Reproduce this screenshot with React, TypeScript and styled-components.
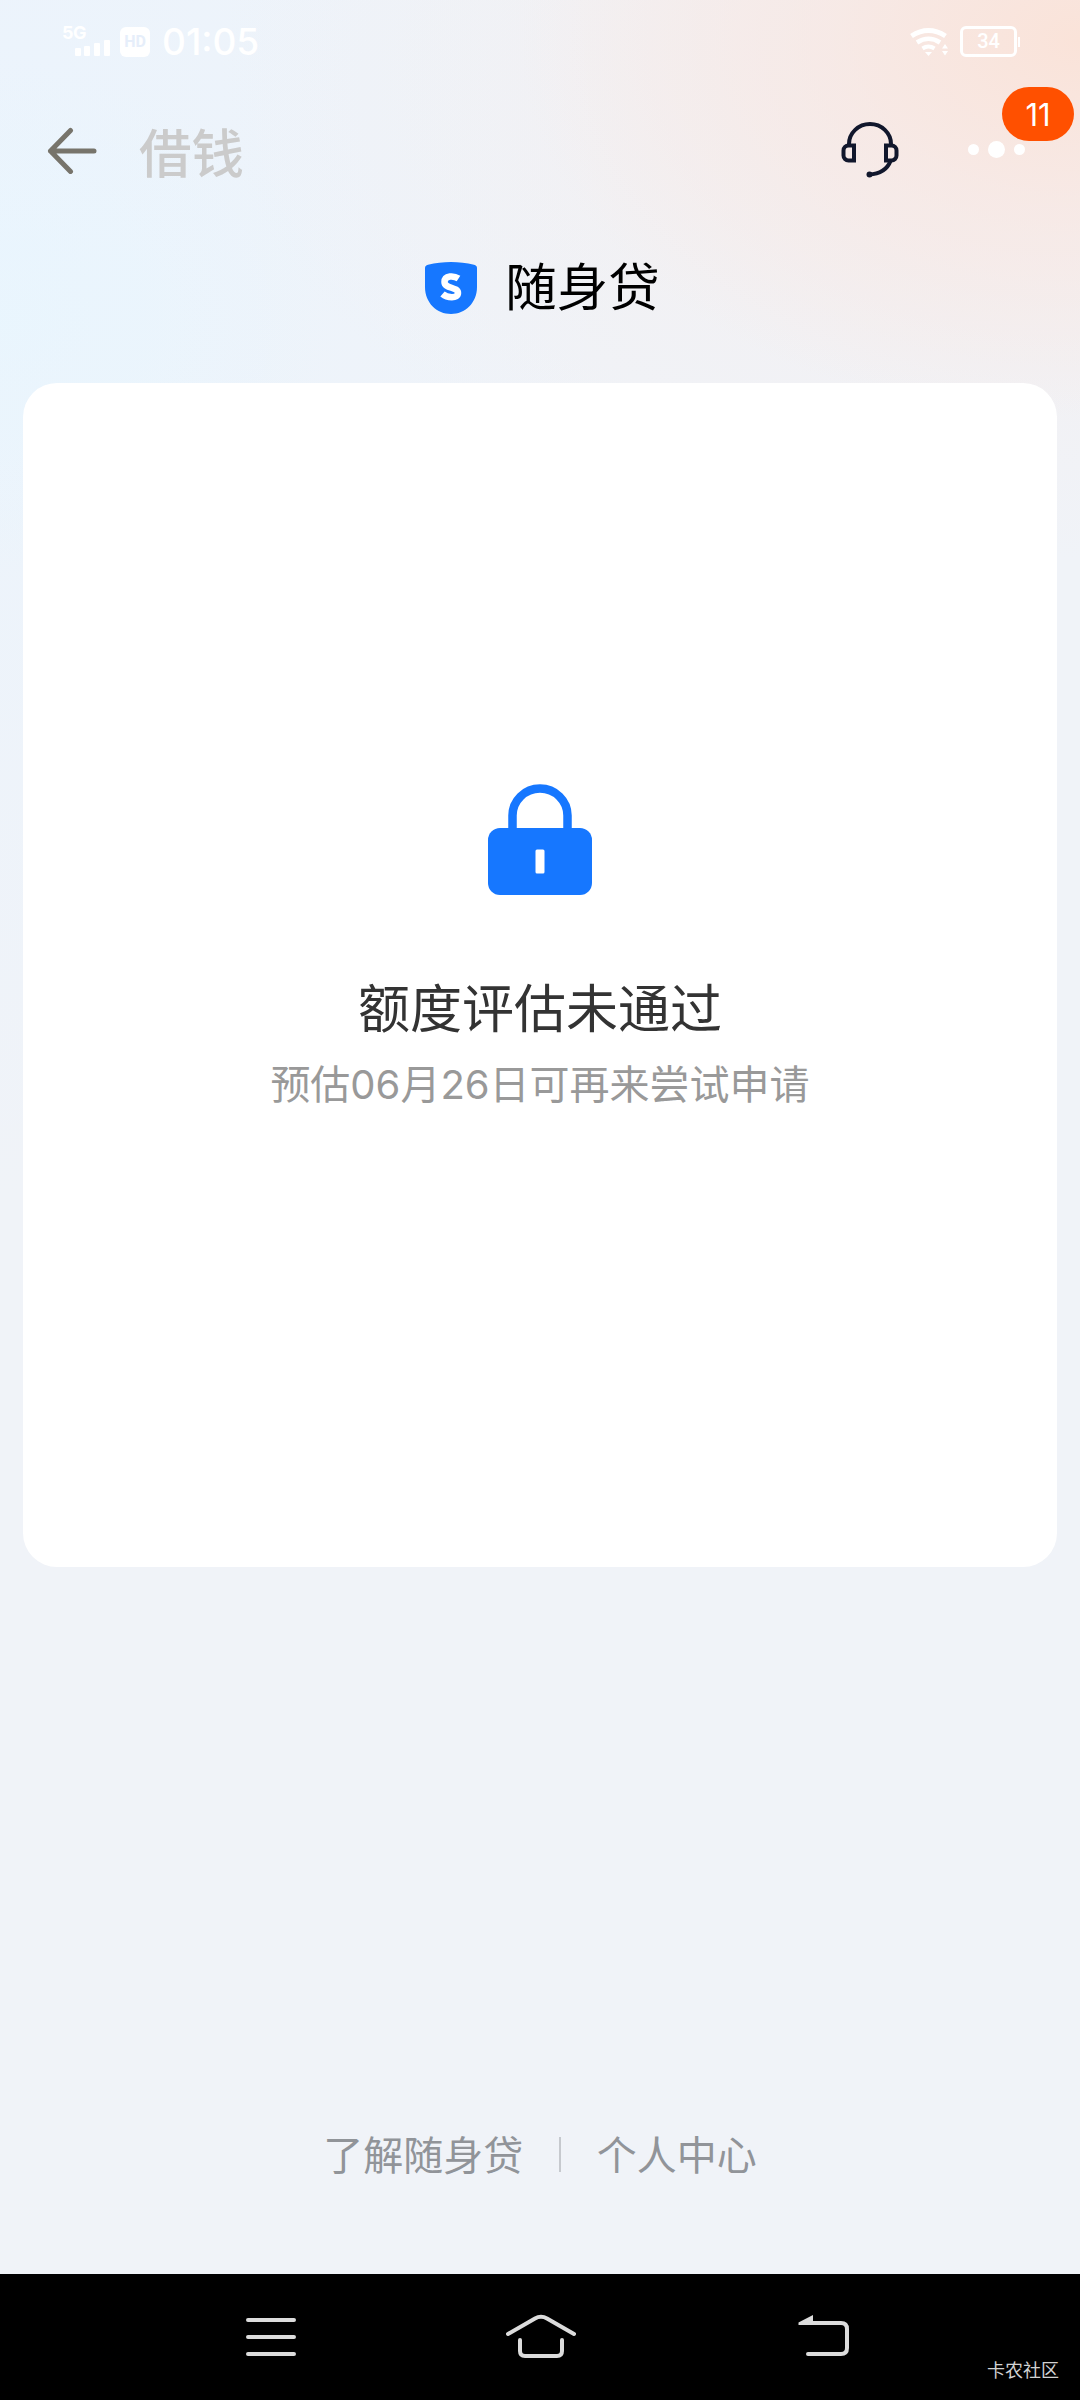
import React from 'react';
import styled, { createGlobalStyle } from 'styled-components';

const Global = createGlobalStyle`
  * { box-sizing: border-box; }
  body { margin: 0; background: #f0f3f8; }
`;

const cjk = `'Noto Sans CJK SC', sans-serif`;

const Screen = styled.div`
  width: 1080px;
  height: 2400px;
  display: flex;
  flex-direction: column;
  overflow: hidden;
  font-family: ${cjk};
  background:
    radial-gradient(ellipse 560px 380px at 1080px 40px, rgba(250, 227, 217, 1) 0%, rgba(248, 231, 226, 0.7) 45%, rgba(244, 238, 238, 0) 100%),
    radial-gradient(ellipse 860px 480px at 1080px 80px, rgba(245, 237, 236, 0.85) 0%, rgba(243, 240, 243, 0) 100%),
    radial-gradient(ellipse 330px 260px at 0px 320px, rgba(232, 246, 254, 0.7) 0%, rgba(235, 244, 252, 0) 100%),
    radial-gradient(ellipse 640px 1000px at 0px 200px, rgba(235, 244, 253, 0.95) 0%, rgba(239, 242, 248, 0) 100%),
    #f0f3f8;
`;

const StatusBar = styled.div`
  height: 84px;
  padding: 24px 60px 0 62px;
  display: flex;
  justify-content: space-between;
  align-items: flex-start;
`;

const StatusGroup = styled.div`
  display: flex;
  align-items: flex-start;
`;

const Network = styled.span`
  width: 27px;
  margin: -1px -27px 0 0;
  font: 700 18px/20px Inter, sans-serif;
  letter-spacing: -0.5px;
  white-space: nowrap;
  color: #fff;
`;

const Clock = styled.span`
  margin-left: 12px;
  font: 500 37px/36px Inter, sans-serif;
  color: #fff;
`;

const Battery = styled.div`
  width: 57px;
  height: 31px;
  margin: 2px 0 0 10px;
  border: 3px solid #fff;
  border-radius: 6px;
  display: flex;
  align-items: center;
  justify-content: center;
  font: 500 20px/25px Roboto, sans-serif;
  color: #fff;
`;

const BatteryTip = styled.div`
  width: 2px;
  height: 10px;
  margin: 13px 0 0 1px;
  background: #fff;
`;

const NavBar = styled.div`
  height: 132px;
  padding: 0 55px 0 46px;
  display: flex;
  align-items: center;
`;

const NavTitle = styled.h1`
  margin: -1px auto 0 41px;
  font-size: 52.5px;
  line-height: 68px;
  font-weight: 500;
  color: #cbcbcb;
`;

const More = styled.div`
  position: relative;
  display: flex;
  align-items: center;
  gap: 9px;
  margin: -2px 0 0 68px;
`;

const Dot = styled.i<{ $size: number }>`
  width: ${p => p.$size}px;
  height: ${p => p.$size}px;
  border-radius: 50%;
  background: #fff;
`;

const Badge = styled.span`
  position: absolute;
  left: 34px;
  bottom: 17px;
  width: 72px;
  height: 54px;
  border-radius: 27px;
  background: #ff5000;
  color: #fff;
  text-align: center;
  font: 400 31px/56px Inter, sans-serif;
`;

const Brand = styled.div`
  height: 167px;
  padding: 31px 0 0 5px;
  display: flex;
  justify-content: center;
  gap: 28px;
`;

const BrandName = styled.h2`
  margin: -1px 0 0;
  font-size: 51.5px;
  line-height: 76px;
  font-weight: 400;
  color: #000;
`;

const Card = styled.main`
  height: 1184px;
  margin: 0 23px;
  padding-top: 401px;
  border-radius: 34px;
  background: #fff;
  display: flex;
  flex-direction: column;
  align-items: center;
`;

const Heading = styled.h3`
  margin: 73px 0 0;
  font-size: 52px;
  line-height: 76px;
  font-weight: 400;
  color: #333;
`;

const Hint = styled.p`
  margin: 11px 0 0;
  font-family: Inter, ${cjk};
  font-size: 40px;
  line-height: 60px;
  font-weight: 400;
  color: #999;
  white-space: nowrap;
`;

const Links = styled.footer`
  margin-top: auto;
  height: 60px;
  margin-bottom: 91px;
  display: flex;
  justify-content: center;
  align-items: center;
  gap: 36px;
`;

const LinkText = styled.a`
  font-size: 40px;
  line-height: 60px;
  color: #919499;
`;

const Divider = styled.i`
  width: 1.5px;
  height: 35px;
  margin-top: 3px;
  background: #c6c9ce;
`;

const SystemBar = styled.nav`
  position: relative;
  height: 126px;
  background: #000;
  display: flex;
  padding: 36px 0 0 244px;
`;

const NavSlot = styled.div<{ $width: number }>`
  width: ${p => p.$width}px;
`;

const Watermark = styled.span`
  position: absolute;
  right: 21px;
  bottom: 18px;
  font-size: 18px;
  line-height: 26px;
  color: #d2d2d2;
`;

const Signal = () => (
  <svg width="50" height="34" viewBox="0 0 50 34" fill="#fff">
    <rect x="13" y="24" width="6" height="8" rx="1" />
    <rect x="22" y="22" width="6" height="10" rx="1" />
    <rect x="32" y="19" width="6" height="13" rx="1" />
    <rect x="42" y="16" width="6" height="16" rx="1" />
  </svg>
);

const HdTag = styled.span`
  width: 30px;
  height: 30px;
  margin: 3px 0 0 8px;
  border-radius: 6px;
  background: #fff;
  color: #e6eefa;
  text-align: center;
  font: 700 16px/30px Roboto, sans-serif;
`;

const Wifi = () => (
  <svg width="40" height="34" viewBox="0 0 40 34" fill="none" stroke="#fff">
    <path d="M1.500 12Q18.500 1 35.500 12" strokeWidth="5" />
    <path d="M7 18.500Q18.500 11 30 18.500" strokeWidth="4.500" />
    <path d="M12.500 24.500Q18.500 20.500 24.500 24.500" strokeWidth="4" />
    <path d="M15 28h7l-3.500 4zM32 24.500l3-4.500 3 4.500zM32 27l3 4.500 3-4.500z" fill="#fff" stroke="none" />
  </svg>
);

const BackArrow = () => (
  <svg width="52" height="48" viewBox="0 0 52 48" fill="none" stroke="#77746b" strokeWidth="5" strokeLinecap="round" strokeLinejoin="round">
    <path d="M24.500 4.500L4.500 25l20 20.500M4.500 25H48" />
  </svg>
);

const Headset = () => (
  <svg width="60" height="60" viewBox="0 0 60 60" fill="none" stroke="#11172c" strokeWidth="4">
    <path d="M9 26V24a21 20 0 0 1 42 0v2" />
    <path d="M14 25.500H8.500a5 5 0 0 0-5 5v5a5 5 0 0 0 5 5H14z" />
    <path d="M46 25.500h5.500a5 5 0 0 1 5 5v5a5 5 0 0 1-5 5H46z" />
    <path d="M50.500 41C47 50 40 54 29 54.500" />
    <circle cx="29.500" cy="54.500" r="3" fill="#11172c" stroke="none" />
  </svg>
);

const ShieldBox = styled.svg`
  margin-top: 15px;
`;

const Shield = () => (
  <ShieldBox width="52" height="52" viewBox="0 0 52 52">
    <path d="M0 6Q0 3.500 3 2.800C18-.9 34-.9 49 2.800Q52 3.500 52 6V25C52 41 40 52 26 52S0 41 0 25z" fill="#1677ff" />
    <path d="M33.500 16.500C29 13.500 19.500 13 19.500 20C19.500 27 33 24.500 33 31C33 37 22 36 17.500 32" fill="none" stroke="#fff" strokeWidth="6.500" />
  </ShieldBox>
);

const Lock = () => (
  <svg width="104" height="111" viewBox="0 0 104 111">
    <path d="M24.500 48V31.500a27.500 27 0 0 1 55 0V48" fill="none" stroke="#1677ff" strokeWidth="8.500" />
    <rect y="44" width="104" height="67" rx="12" fill="#1677ff" />
    <rect x="47.500" y="65.500" width="9" height="24" rx="1.500" fill="#fff" />
  </svg>
);

const navIcon = { width: 72, height: 52, fill: 'none', stroke: '#dcdcdc', strokeWidth: 4, strokeLinecap: 'round' as const };

export default function App() {
  return (
    <>
      <Global />
      <Screen>
        <StatusBar>
          <StatusGroup>
            <Network>5G</Network>
            <Signal />
            <HdTag>HD</HdTag>
            <Clock>01:05</Clock>
          </StatusGroup>
          <StatusGroup>
            <Wifi />
            <Battery>34</Battery>
            <BatteryTip />
          </StatusGroup>
        </StatusBar>
        <NavBar>
          <BackArrow />
          <NavTitle>借钱</NavTitle>
          <Headset />
          <More>
            <Dot $size={11} />
            <Dot $size={17} />
            <Dot $size={11} />
            <Badge>11</Badge>
          </More>
        </NavBar>
        <Brand>
          <Shield />
          <BrandName>随身贷</BrandName>
        </Brand>
        <Card>
          <Lock />
          <Heading>额度评估未通过</Heading>
          <Hint>预估06月26日可再来尝试申请</Hint>
        </Card>
        <Links>
          <LinkText>了解随身贷</LinkText>
          <Divider />
          <LinkText>个人中心</LinkText>
        </Links>
        <SystemBar>
          <NavSlot $width={260}>
            <svg {...navIcon} width={54}>
              <path d="M4 10H50M4 27H50M4 44H50" />
            </svg>
          </NavSlot>
          <NavSlot $width={292}>
            <svg {...navIcon}>
              <path d="M4 24L31 8.500Q37 5 43 8.500L70 24M16 30V41Q16 46 21 46H53Q58 46 58 41V30" />
            </svg>
          </NavSlot>
          <NavSlot $width={56}>
            <svg {...navIcon} width={56}>
              <path d="M14 13H45Q51 13 51 19V38Q51 44 45 44H12" />
              <path d="M2.500 15V12.500L17 5V15z" fill="#dcdcdc" stroke="none" />
            </svg>
          </NavSlot>
          <Watermark>卡农社区</Watermark>
        </SystemBar>
      </Screen>
    </>
  );
}
